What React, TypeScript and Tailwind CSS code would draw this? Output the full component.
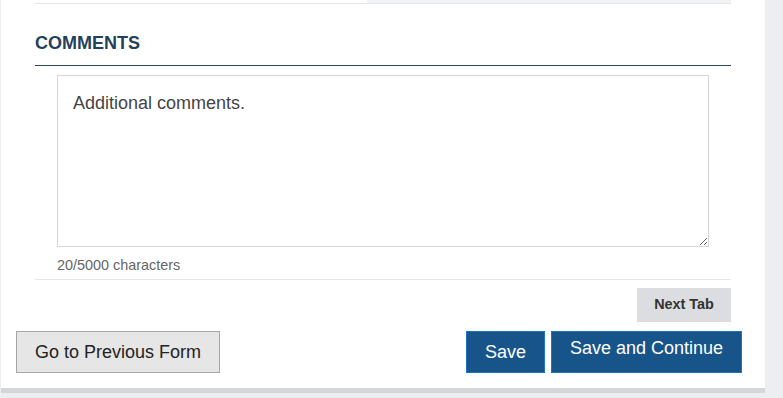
import { useState } from 'react';

const font = { fontFamily: '"Liberation Sans", Arial, sans-serif' };

export default function App() {
  const [comments, setComments] = useState('Additional comments.');

  return (
    <div className="min-h-[398px] bg-[#eceef1] pb-[5px]" style={font}>
      <div className="ml-px w-[764px] bg-white border-b-[5px] border-[#d4d7da] pb-[15px]">
        <div className="pl-[34px] w-[730px]">
          {/* tab strip remnant */}
          <div className="flex h-[4px] border-b border-[#e3e5e8]">
            <div className="flex-1" />
            <div className="w-[364px] bg-[#f1f2f4]" />
          </div>

          <h2 className="mt-[27px] pb-[10px] border-b border-[#2e4a5c] text-[18px] leading-[24px] font-bold text-[#25425a]">
            COMMENTS
          </h2>

          <div className="mt-[9px] px-[22px] pb-[4px] border-b border-[#e6e6e6]">
            <textarea
              value={comments}
              onChange={(e) => setComments(e.target.value)}
              maxLength={5000}
              className="block w-full h-[172px] border border-[#d6d6d6] px-[15px] py-[15px] text-[18px] leading-[24px] text-[#444] outline-none"
              style={font}
            />
            <p className="mt-[8px] text-[14.4px] leading-[20px] text-[#666]">
              {comments.length}/5000 characters
            </p>
          </div>

          <div className="mt-[8px] flex justify-end">
            <button className="h-[34px] w-[94px] bg-[#dcdde0] text-[14.4px] font-bold text-[#333]">
              Next Tab
            </button>
          </div>
        </div>

        <div className="mt-[9px] flex items-start pl-[15px] pr-[23px]">
          <button className="h-[42px] w-[204px] border border-[#a6a6a6] bg-[#e6e6e6] text-[18px] text-[#222]">
            Go to Previous Form
          </button>
          <div className="flex-1" />
          <button className="h-[42px] w-[79px] border border-[#1f74c6] bg-[#175489] text-[18px] text-white">
            Save
          </button>
          <button className="ml-[6px] h-[42px] w-[191px] border border-[#1f74c6] bg-[#175489] pb-[8px] text-[18px] text-white">
            Save and Continue
          </button>
        </div>
      </div>
    </div>
  );
}
